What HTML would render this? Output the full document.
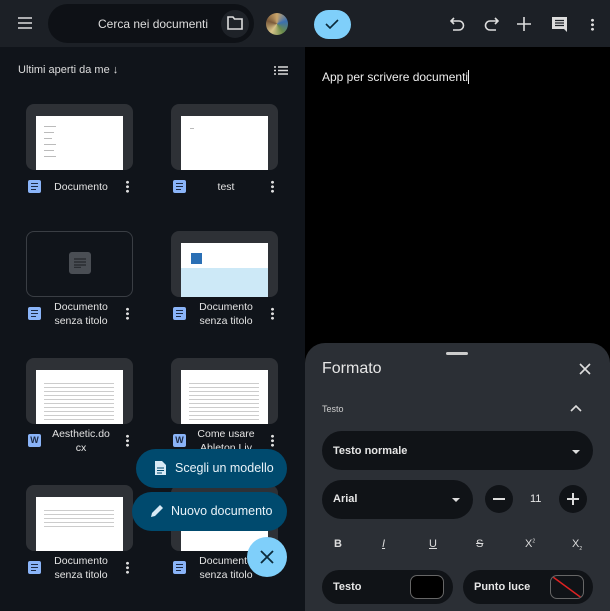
<!DOCTYPE html>
<html><head><meta charset="utf-8"><style>
*{margin:0;padding:0;box-sizing:border-box}
body{width:610px;height:611px;overflow:hidden;background:#000;font-family:"Liberation Sans",Arial,sans-serif;color:#e3e3e3;position:relative}
.abs{position:absolute}
.left{left:0;top:0;width:305px;height:611px;background:#10141a}
.top{left:0;top:0;width:610px;height:47px;background:#1c2026}
.card{position:absolute;width:107px;height:66px;background:#2e3136;border-radius:8px;overflow:hidden}
.pg{position:absolute;left:10px;top:12px;width:87px;height:54px;background:#fff}
.lbl{position:absolute;font-size:10.5px;text-align:center;line-height:14px;color:#e3e3e3}
.ic{position:absolute;width:13px;height:13px;background:#8ab4f8;border-radius:2px}
.ic i{position:absolute;left:3px;height:1.3px;background:#1c2a44;width:7px}
.dots{position:absolute;width:3px;height:13px;background:radial-gradient(circle,#ddd 1.3px,transparent 1.6px) 0 0/3px 4.5px repeat-y}
.w{position:absolute;width:13px;height:13px;background:#8ab4f8;border-radius:2px;color:#1c2a44;font-size:9px;font-weight:bold;text-align:center;line-height:13px}
.line{position:absolute;height:1px;background:#bbb}
.sheet{left:305px;top:343px;width:305px;height:268px;background:#2b2f35;border-radius:20px 20px 0 0}
.pill{position:absolute;background:#101317;border-radius:20px}
</style></head><body>
<div class="abs left"></div>
<div class="abs top"></div>
<svg class="abs" style="left:18px;top:17px" width="14" height="12"><path d="M0 1h14M0 6h14M0 11h14" stroke="#ddd" stroke-width="1.6"/></svg>
<div class="abs" style="left:48px;top:4px;width:206px;height:39px;background:#0e1116;border-radius:20px"></div>
<div class="abs" style="left:98px;top:17px;font-size:12px;color:#ddd">Cerca nei documenti</div>
<div class="abs" style="left:221px;top:10px;width:28px;height:28px;border-radius:14px;background:#1e2228"></div>
<svg class="abs" style="left:227px;top:16px" width="16" height="14"><path d="M1 1h5l1.5 2H15v10H1z" fill="none" stroke="#ddd" stroke-width="1.6"/></svg>
<div class="abs" style="left:266px;top:13px;width:22px;height:22px;border-radius:11px;background:conic-gradient(#c9a46a,#3a6fb0,#6a8b4a,#d8c48a,#7b5a3a,#c9a46a)"></div>
<div class="abs" style="left:18px;top:64px;font-size:11px;color:#ddd">Ultimi aperti da me ↓</div>
<svg class="abs" style="left:274px;top:66px" width="14" height="9"><path d="M0 1h2M4 1h10M0 4.5h2M4 4.5h10M0 8h2M4 8h10" stroke="#ddd" stroke-width="1.6"/></svg>

<div class="card" style="left:26px;top:104px"><div class="pg"><div class="line" style="left:8px;top:10px;width:12px"></div><div class="line" style="left:8px;top:16px;width:10px"></div><div class="line" style="left:8px;top:22px;width:8px"></div><div class="line" style="left:8px;top:28px;width:12px"></div><div class="line" style="left:8px;top:34px;width:10px"></div><div class="line" style="left:8px;top:40px;width:12px"></div></div></div>
<div class="ic" style="left:28px;top:180px"><i style="top:3px"></i><i style="top:6px"></i><i style="top:9px;width:5px"></i></div>
<div class="lbl" style="left:50px;top:180px;width:62px">Documento</div>
<div class="dots" style="left:126px;top:180px"></div>
<div class="card" style="left:171px;top:104px"><div class="pg"><div class="line" style="left:9px;top:12px;width:4px"></div></div></div>
<div class="ic" style="left:173px;top:180px"><i style="top:3px"></i><i style="top:6px"></i><i style="top:9px;width:5px"></i></div>
<div class="lbl" style="left:195px;top:180px;width:62px">test</div>
<div class="dots" style="left:271px;top:180px"></div>
<div class="card" style="left:26px;top:231px;background:#10141a;border:1px solid #3a3e44"><div class="abs" style="left:42px;top:20px;width:22px;height:22px;background:#4a4e54;border-radius:3px"></div>
<svg class="abs" style="left:47px;top:26px" width="12" height="10"><path d="M0 1h12M0 4h12M0 7h12M0 9.5h7" stroke="#2a2d32" stroke-width="1.4"/></svg></div>
<div class="ic" style="left:28px;top:307px"><i style="top:3px"></i><i style="top:6px"></i><i style="top:9px;width:5px"></i></div>
<div class="lbl" style="left:50px;top:300px;width:62px">Documento<br>senza titolo</div>
<div class="dots" style="left:126px;top:307px"></div>
<div class="card" style="left:171px;top:231px"><div class="pg"><div class="abs" style="left:10px;top:10px;width:11px;height:11px;background:#2a6fb5"></div><div class="abs" style="left:0;top:25px;width:87px;height:29px;background:#cde9f7"></div></div></div>
<div class="ic" style="left:173px;top:307px"><i style="top:3px"></i><i style="top:6px"></i><i style="top:9px;width:5px"></i></div>
<div class="lbl" style="left:195px;top:300px;width:62px">Documento<br>senza titolo</div>
<div class="dots" style="left:271px;top:307px"></div>
<div class="card" style="left:26px;top:358px"><div class="pg" style="background:#fff repeating-linear-gradient(#fff 0 3px,#ccc 3px 4px) 8px 10px/70px 40px no-repeat"></div></div>
<div class="w" style="left:28px;top:434px">W</div>
<div class="lbl" style="left:48px;top:427px;width:66px">Aesthetic.do<br>cx</div>
<div class="dots" style="left:126px;top:434px"></div>
<div class="card" style="left:171px;top:358px"><div class="pg" style="background:#fff repeating-linear-gradient(#fff 0 3px,#ccc 3px 4px) 8px 10px/70px 40px no-repeat"></div></div>
<div class="w" style="left:173px;top:434px">W</div>
<div class="lbl" style="left:195px;top:427px;width:62px">Come usare<br>Ableton Liv</div>
<div class="dots" style="left:271px;top:434px"></div>
<div class="card" style="left:26px;top:485px"><div class="pg" style="background:#fff repeating-linear-gradient(#fff 0 3px,#ccc 3px 4px) 8px 10px/70px 20px no-repeat"></div></div>
<div class="ic" style="left:28px;top:561px"><i style="top:3px"></i><i style="top:6px"></i><i style="top:9px;width:5px"></i></div>
<div class="lbl" style="left:50px;top:554px;width:62px">Documento<br>senza titolo</div>
<div class="dots" style="left:126px;top:561px"></div>
<div class="card" style="left:171px;top:485px"><div class="pg"></div></div>
<div class="ic" style="left:173px;top:561px"><i style="top:3px"></i><i style="top:6px"></i><i style="top:9px;width:5px"></i></div>
<div class="lbl" style="left:195px;top:554px;width:62px">Documento<br>senza titolo</div>
<div class="abs" style="left:136px;top:449px;width:151px;height:39px;background:#004a6e;border-radius:20px"></div>
<svg class="abs" style="left:155px;top:461px" width="11" height="14"><path d="M0 0h7l4 4v10H0z" fill="#d8eaf5"/><path d="M2 7h7M2 9.5h7M2 12h5" stroke="#004a6e" stroke-width="1"/></svg>
<div class="abs" style="left:175px;top:461px;font-size:12.5px;color:#e8f2f8">Scegli un modello</div>
<div class="abs" style="left:132px;top:492px;width:155px;height:39px;background:#004a6e;border-radius:20px"></div>
<svg class="abs" style="left:150px;top:504px" width="14" height="14"><path d="M1 13l1-4 8-8 3 3-8 8z" fill="#d8eaf5"/></svg>
<div class="abs" style="left:171px;top:504px;font-size:12.5px;color:#e8f2f8">Nuovo documento</div>
<div class="abs" style="left:247px;top:537px;width:40px;height:40px;border-radius:20px;background:#7fcffa"></div>
<svg class="abs" style="left:260px;top:550px" width="14" height="14"><path d="M1 1l12 12M13 1L1 13" stroke="#0b2a3a" stroke-width="1.8"/></svg>

<div class="abs" style="left:314px;top:10px;width:37px;height:29px;border-radius:15px;background:#7fcffa"></div>
<svg class="abs" style="left:325px;top:19px" width="14" height="10"><path d="M1 5l4 4 8-8" fill="none" stroke="#0b2a3a" stroke-width="1.6"/></svg>
<svg class="abs" style="left:450px;top:16px" width="16" height="16"><path d="M4 2L1 5l3 3M1 5h8a4.5 4.5 0 010 9H3" fill="none" stroke="#ddd" stroke-width="1.6"/></svg>
<svg class="abs" style="left:483px;top:16px" width="16" height="16"><path d="M12 2l3 3-3 3M15 5H7a4.5 4.5 0 000 9h6" fill="none" stroke="#ddd" stroke-width="1.6"/></svg>
<svg class="abs" style="left:517px;top:17px" width="14" height="14"><path d="M7 0v14M0 7h14" stroke="#ddd" stroke-width="1.6"/></svg>
<svg class="abs" style="left:552px;top:17px" width="15" height="15"><path d="M0 0h15v15l-3-3H0z" fill="#ddd"/><path d="M3 3.5h9M3 6h9M3 8.5h9" stroke="#1c2026" stroke-width="1.2"/></svg>
<div class="dots" style="left:591px;top:18px"></div>
<div class="abs" style="left:322px;top:70px;font-size:12px;color:#eee">App per scrivere documenti<span style="display:inline-block;width:1px;height:14px;background:#eee;vertical-align:-3px"></span></div>

<div class="abs sheet"></div>
<div class="abs" style="left:446px;top:352px;width:22px;height:3px;border-radius:2px;background:#ccc"></div>
<div class="abs" style="left:322px;top:360px;font-size:16px;color:#e6e6e6">Formato</div>
<svg class="abs" style="left:579px;top:363px" width="12" height="12"><path d="M1 1l10 10M11 1L1 11" stroke="#ddd" stroke-width="1.6"/></svg>
<div class="abs" style="left:322px;top:404px;font-size:9px;color:#ccc">Testo</div>
<svg class="abs" style="left:570px;top:405px" width="12" height="8"><path d="M1 6l5-5 5 5" fill="none" stroke="#ddd" stroke-width="1.6"/></svg>
<div class="pill" style="left:322px;top:431px;width:271px;height:39px"></div>
<div class="abs" style="left:333px;top:445px;font-size:11px;font-weight:bold;color:#e6e6e6">Testo normale</div>
<div class="abs" style="left:572px;top:450px;border:4px solid transparent;border-top:4px solid #ddd;border-bottom:0"></div>
<div class="pill" style="left:322px;top:480px;width:151px;height:39px"></div>
<div class="abs" style="left:333px;top:493px;font-size:11px;font-weight:bold;color:#e6e6e6">Arial</div>
<div class="abs" style="left:452px;top:498px;border:4px solid transparent;border-top:4px solid #ddd;border-bottom:0"></div>
<div class="abs" style="left:485px;top:485px;width:28px;height:28px;border-radius:14px;background:#101317"></div>
<div class="abs" style="left:493px;top:498px;width:12px;height:2px;background:#ddd"></div>
<div class="abs" style="left:530px;top:493px;font-size:11px;color:#e6e6e6">11</div>
<div class="abs" style="left:559px;top:485px;width:28px;height:28px;border-radius:14px;background:#101317"></div>
<svg class="abs" style="left:567px;top:493px" width="12" height="12"><path d="M6 0v12M0 6h12" stroke="#ddd" stroke-width="2"/></svg>
<div class="abs" style="left:334px;top:538px;font-size:11px;font-weight:bold;color:#ddd">B</div>
<div class="abs" style="left:382px;top:538px;font-size:11px;font-style:italic;color:#ddd;text-decoration:underline">I</div>
<div class="abs" style="left:429px;top:538px;font-size:11px;color:#ddd;text-decoration:underline">U</div>
<div class="abs" style="left:476px;top:538px;font-size:11px;color:#ddd;text-decoration:line-through">S</div>
<div class="abs" style="left:525px;top:538px;font-size:11px;color:#ddd">X<sup style="font-size:5px">2</sup></div>
<div class="abs" style="left:572px;top:538px;font-size:11px;color:#ddd">X<sub style="font-size:5px">2</sub></div>
<div class="pill" style="left:322px;top:570px;width:131px;height:34px"></div>
<div class="abs" style="left:333px;top:581px;font-size:11px;font-weight:bold;color:#e6e6e6">Testo</div>
<div class="abs" style="left:410px;top:575px;width:34px;height:24px;border-radius:7px;background:#000;border:1px solid #666"></div>
<div class="pill" style="left:463px;top:570px;width:130px;height:34px"></div>
<div class="abs" style="left:474px;top:581px;font-size:11px;font-weight:bold;color:#e6e6e6">Punto luce</div>
<div class="abs" style="left:550px;top:575px;width:34px;height:24px;border-radius:7px;background:#101317;border:1px solid #666;overflow:hidden"><svg width="34" height="24"><path d="M2 1l30 22" stroke="#d22" stroke-width="1.5"/></svg></div>
</body></html>
